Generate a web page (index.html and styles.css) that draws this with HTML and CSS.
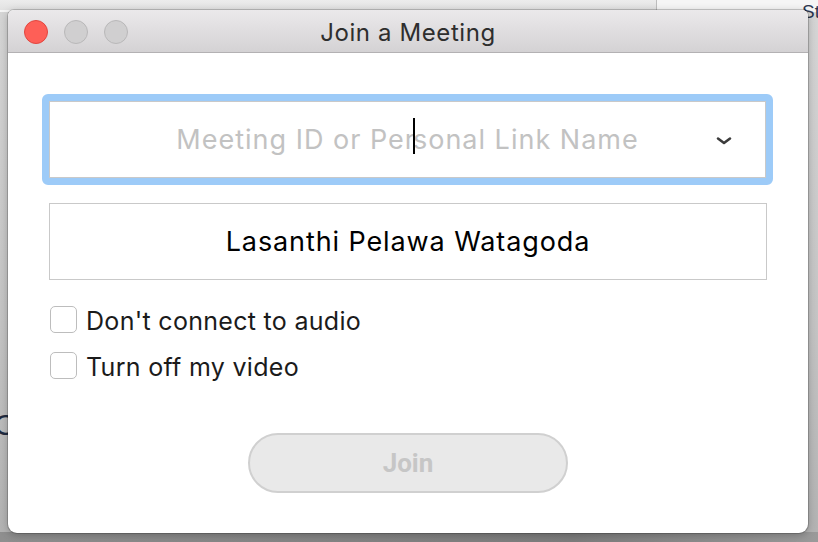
FILE: index.html
```html
<!DOCTYPE html>
<html>
<head>
<meta charset="utf-8">
<link rel="stylesheet" href="styles.css">
</head>
<body>
<div class="desktop">
  <div class="bg-top"></div>
  <div class="bg-behind"></div>
  <div class="bg-text-st">St</div>
  <div class="bg-text-c">C</div>
  <div class="bg-bottom"></div>

  <div class="window">
    <div class="titlebar">
      <div class="lights">
        <span class="light red"></span>
        <span class="light grey"></span>
        <span class="light grey"></span>
      </div>
      <div class="title">Join a Meeting</div>
    </div>
    <div class="content">
      <div class="focus-ring">
        <div class="field field-id">
          <span class="placeholder">Meeting ID or Per<span class="caret"></span>sonal Link Name</span>
          <svg class="chevron" width="16" height="10" viewBox="0 0 16 10"><path d="M2 2.5 L8 7 L14 2.5" fill="none" stroke="#3c3c3c" stroke-width="2.6" stroke-linecap="round" stroke-linejoin="round"/></svg>
        </div>
      </div>
      <div class="field field-name">Lasanthi Pelawa Watagoda</div>
      <div class="options">
        <label class="option"><span class="box"></span><span>Don't connect to audio</span></label>
        <label class="option"><span class="box"></span><span>Turn off my video</span></label>
      </div>
      <div class="actions">
        <button class="join">Join</button>
      </div>
    </div>
  </div>
</div>
</body>
</html>
```
FILE: styles.css
```css
html, body {
  margin: 0;
  padding: 0;
  width: 818px;
  height: 542px;
  overflow: hidden;
}
body {
  font-family: "Inter", "Roboto", "Liberation Sans", sans-serif;
}
.desktop {
  position: relative;
  width: 818px;
  height: 542px;
  background: linear-gradient(to bottom, #d6d6d6 0%, #c4c4c4 60%, #b2b2b2 100%);
  overflow: hidden;
}
.bg-top {
  position: absolute;
  left: 0; top: 0;
  width: 818px; height: 12px;
  background: #f5f5f5;
}
.bg-behind {
  position: absolute;
  left: 0; top: 0;
  width: 656px; height: 10px;
  background: linear-gradient(to bottom, #ececec, #e2e2e2);
  border-right: 1px solid #bdbdbd;
}
.bg-text-st {
  position: absolute;
  left: 802px; top: 1px;
  font-family: "Liberation Sans", sans-serif;
  font-size: 19px;
  color: #2c3650;
}
.bg-text-c {
  position: absolute;
  left: -6px; top: 408px;
  font-family: "Liberation Sans", sans-serif;
  font-size: 30px;
  color: #1f2a40;
}
.bg-bottom {
  position: absolute;
  left: 0; bottom: 0;
  width: 818px; height: 10px;
  background: linear-gradient(to right, #8f8f8f, #7d7d7d 70%, #9a9a9a);
}
.window {
  position: absolute;
  left: 8px;
  top: 10px;
  width: 800px;
  height: 523px;
  background: #ffffff;
  border-radius: 6px 6px 9px 9px;
  box-shadow: 0 0 0 1px rgba(0,0,0,0.18), 0 2px 8px rgba(0,0,0,0.25);
  overflow: hidden;
  display: flex;
  flex-direction: column;
}
.titlebar {
  height: 42px;
  flex: none;
  position: relative;
  background: linear-gradient(to bottom, #ebe9eb, #d4d2d4);
  border-bottom: 1px solid #b3b1b3;
  display: flex;
  align-items: center;
  justify-content: center;
}
.lights {
  position: absolute;
  left: 16px;
  top: 10px;
  display: flex;
  gap: 16px;
}
.light {
  width: 22px;
  height: 22px;
  border-radius: 50%;
  display: block;
}
.light.red {
  background: #fe5f57;
  border: 1px solid #e2463f;
}
.light.grey {
  background: #d0cfd0;
  border: 1px solid #b9b8b9;
}
.title {
  font-size: 24px;
  color: #2e2e2e;
  letter-spacing: 0.6px;
  margin-top: 2px;
}
.content {
  padding: 41px 34px 0 34px;
  display: flex;
  flex-direction: column;
}
.focus-ring {
  border: 7px solid #9dcbf8;
  border-radius: 6px;
  width: 731px;
  box-sizing: border-box;
}
.field {
  box-sizing: border-box;
  border: 1px solid #c9c9c9;
  height: 77px;
  display: flex;
  align-items: center;
  justify-content: center;
  font-size: 27px;
  position: relative;
}
.field-id {
  width: 717px;
}
.placeholder {
  color: #c2c2c2;
  position: relative;
  letter-spacing: 1px;
}
.caret {
  display: inline-block;
  width: 2px;
  height: 36px;
  background: #000;
  vertical-align: middle;
  margin: -6px -2px 0 -3px;
  position: relative;
  top: -2px;
}
.chevron {
  position: absolute;
  right: 33px;
  top: 34px;
}
.field-name {
  margin: 18px 0 0 7px;
  width: 718px;
  color: #000;
  letter-spacing: 0.9px;
}
.options {
  margin-top: 25px;
  margin-left: 8px;
  display: flex;
  flex-direction: column;
  gap: 17px;
}
.option {
  display: flex;
  align-items: center;
  gap: 9px;
  font-size: 25px;
  letter-spacing: 0.3px;
  color: #1b1b1b;
  height: 27px;
  padding-top: 2px;
}
.box {
  width: 27px;
  height: 27px;
  box-sizing: border-box;
  border: 1px solid #bdbdbd;
  border-radius: 5px;
  background: #fff;
  flex: none;
  margin-top: -2px;
}
.actions {
  display: flex;
  justify-content: center;
  margin-top: 53px;
}
.join {
  width: 320px;
  height: 60px;
  border-radius: 30px;
  border: 2px solid #d0d0d0;
  background: #e9e9e9;
  color: #c6c6c6;
  font-family: "Roboto", "Inter", sans-serif;
  font-weight: 700;
  font-size: 26px;
  padding: 0;
}
```
